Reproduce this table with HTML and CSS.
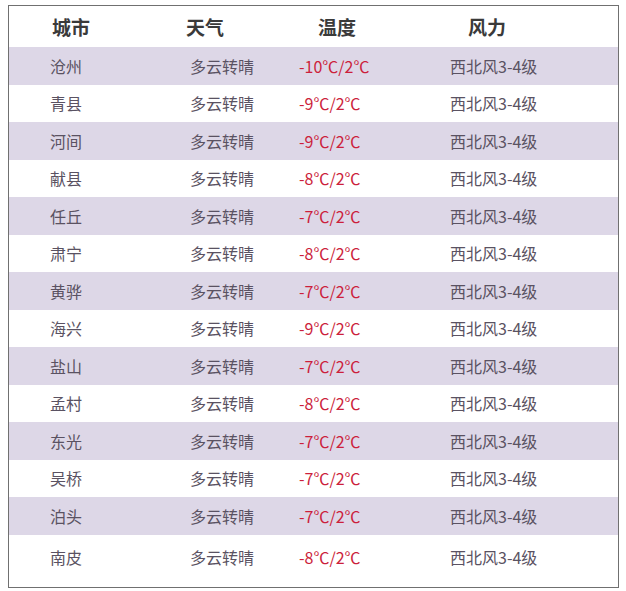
FILE: index.html
```html
<!DOCTYPE html>
<html lang="zh">
<head>
<meta charset="utf-8">
<link rel="stylesheet" href="styles.css">
</head>
<body>
<div class="table">
  <div class="row head">
    <div class="c1">城市</div><div class="c2">天气</div><div class="c3">温度</div><div class="c4">风力</div>
  </div>
  <div class="row alt"><div class="c1">沧州</div><div class="c2">多云转晴</div><div class="c3 t">-10℃/2℃</div><div class="c4">西北风3-4级</div></div>
  <div class="row"><div class="c1">青县</div><div class="c2">多云转晴</div><div class="c3 t">-9℃/2℃</div><div class="c4">西北风3-4级</div></div>
  <div class="row alt"><div class="c1">河间</div><div class="c2">多云转晴</div><div class="c3 t">-9℃/2℃</div><div class="c4">西北风3-4级</div></div>
  <div class="row"><div class="c1">献县</div><div class="c2">多云转晴</div><div class="c3 t">-8℃/2℃</div><div class="c4">西北风3-4级</div></div>
  <div class="row alt"><div class="c1">任丘</div><div class="c2">多云转晴</div><div class="c3 t">-7℃/2℃</div><div class="c4">西北风3-4级</div></div>
  <div class="row"><div class="c1">肃宁</div><div class="c2">多云转晴</div><div class="c3 t">-8℃/2℃</div><div class="c4">西北风3-4级</div></div>
  <div class="row alt"><div class="c1">黄骅</div><div class="c2">多云转晴</div><div class="c3 t">-7℃/2℃</div><div class="c4">西北风3-4级</div></div>
  <div class="row"><div class="c1">海兴</div><div class="c2">多云转晴</div><div class="c3 t">-9℃/2℃</div><div class="c4">西北风3-4级</div></div>
  <div class="row alt"><div class="c1">盐山</div><div class="c2">多云转晴</div><div class="c3 t">-7℃/2℃</div><div class="c4">西北风3-4级</div></div>
  <div class="row"><div class="c1">孟村</div><div class="c2">多云转晴</div><div class="c3 t">-8℃/2℃</div><div class="c4">西北风3-4级</div></div>
  <div class="row alt"><div class="c1">东光</div><div class="c2">多云转晴</div><div class="c3 t">-7℃/2℃</div><div class="c4">西北风3-4级</div></div>
  <div class="row"><div class="c1">吴桥</div><div class="c2">多云转晴</div><div class="c3 t">-7℃/2℃</div><div class="c4">西北风3-4级</div></div>
  <div class="row alt"><div class="c1">泊头</div><div class="c2">多云转晴</div><div class="c3 t">-7℃/2℃</div><div class="c4">西北风3-4级</div></div>
  <div class="row last"><div class="c1">南皮</div><div class="c2">多云转晴</div><div class="c3 t">-8℃/2℃</div><div class="c4">西北风3-4级</div></div>
</div>
</body>
</html>
```
FILE: styles.css
```css
html, body {
  background: #ffffff;
}
body {
  margin: 5px 0 0 8px;
  font-family: "Noto Sans CJK SC", "Noto Sans", sans-serif;
}
.table {
  width: 609px;
  border: 1px solid #707070;
  padding-bottom: 9px;
}
.row {
  display: grid;
  grid-template-columns: 141px 120px 140px 1fr;
  height: 37.5px;
  align-items: center;
  font-size: 16px;
  color: #5a5262;
}
.row.alt {
  background: #ddd7e7;
}
.row.head {
  height: 41px;
  font-size: 19px;
  font-weight: 700;
  color: #3a3a3a;
}
.row.last {
  height: 43px;
  padding-top: 2px;
  box-sizing: border-box;
}
.c1 { padding-left: 41px; }
.c2 { padding-left: 40px; }
.c3 { padding-left: 29px; }
.c4 { padding-left: 40px; }
.head .c1 { padding-left: 43px; }
.head .c2 { padding-left: 36px; }
.head .c3 { padding-left: 48px; }
.head .c4 { padding-left: 58px; }
.t {
  color: #cc1f3c;
}
```
